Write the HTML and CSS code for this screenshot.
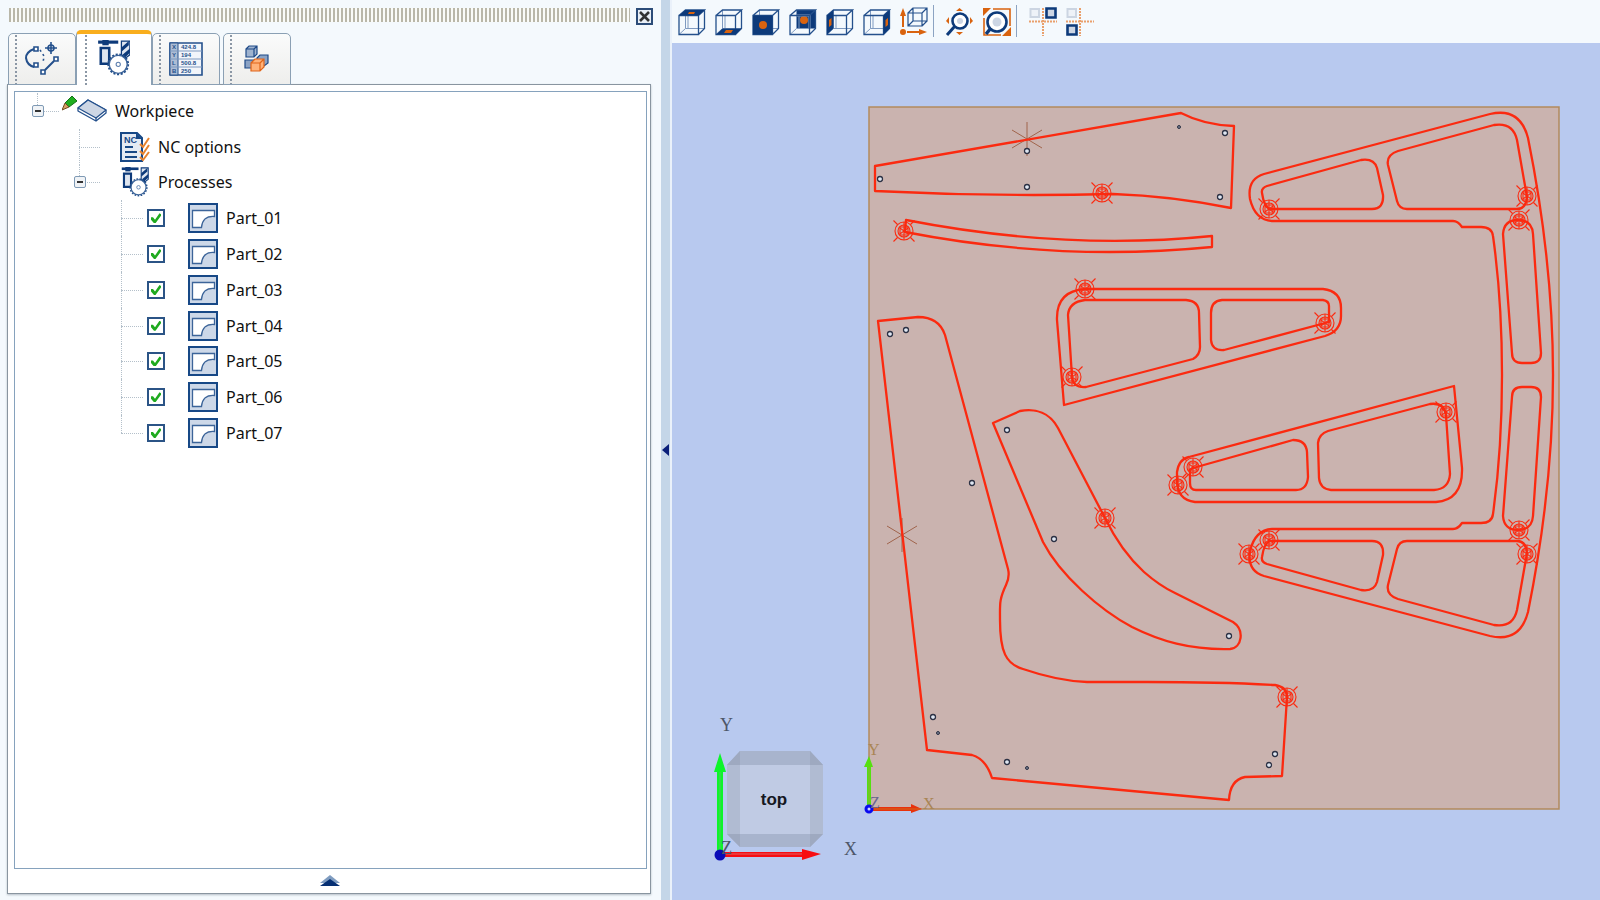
FILE: index.html
```html
<!DOCTYPE html>
<html lang="en">
<head>
    <meta charset="UTF-8">
    <meta name="viewport" content="width=device-width, initial-scale=1.0">
    <title>Workpiece</title>
    <link rel="stylesheet" href="styles.css">
</head>
<body>
    <!-- shared icons -->
    <svg class="defs" aria-hidden="true">
        <symbol id="cube" viewBox="0 0 28 28">
            <path d="M7.5 2V20.5H26.5M10 7.5V20M7.5 20.5L1 26.5" fill="none" stroke="#7f9ac0" stroke-width="1"/>
            <path d="M1 7.5H20.5V26.5H1ZM1 7.5L7.5 2H26.5L20.5 7.5M26.5 2V20.5L20.5 26.5" fill="none" stroke="#24508c" stroke-width="1.3"/>
        </symbol>
        <symbol id="machine" viewBox="0 0 30 34">
            <path d="M0 2H19" stroke="#0d3a7a" stroke-width="3"/>
            <path d="M4 0H10V5H4Z" fill="#0d3a7a"/>
            <path d="M2.5 7.5H10.5V22.5H2.5Z" fill="#dfe6f0" stroke="#0d3a7a" stroke-width="2.4"/>
            <path d="M22 1H30V14L26 17L22 14Z" fill="#dfe6f0" stroke="#0d3a7a" stroke-width="1.2"/>
            <path d="M22 7L29 1V5L22 11ZM23 14L30 8V12L25 17Z" fill="#0d3a7a"/>
            <circle cx="19" cy="23" r="8.5" fill="#fff" stroke="#3c6499" stroke-width="1.3"/>
            <circle cx="19" cy="23" r="9.5" fill="none" stroke="#24508c" stroke-width="1.6" stroke-dasharray="2 1.5"/>
            <circle cx="19" cy="23" r="2" fill="none" stroke="#5d7fae"/>
        </symbol>
        <symbol id="contour" viewBox="0 0 30 30">
            <path d="M1 1H29V29H1Z" fill="#cdd8e8" stroke="#174886" stroke-width="2"/>
            <path d="M4.5 7.5H26.5V13.5Q14.5 12.5 13.5 24.5H4.5Z" fill="#fff" stroke="#3c6499" stroke-width="1.3"/>
        </symbol>
        <symbol id="start" viewBox="-12 -12 24 24">
            <g fill="none" stroke="#fb2a10" stroke-width="1.1">
                <circle r="9"/>
                <circle r="6"/>
                <path d="M-10.5 -10.5L-6.5 -6.5M10.5 -10.5L6.5 -6.5M-10.5 10.5L-6.5 6.5M10.5 10.5L6.5 6.5"/>
                <path d="M0 -9V9M-4 -3V3L4 -3V3ZM-4 -4H4M-4 4H4"/>
            </g>
        </symbol>
        <symbol id="hole" viewBox="-4 -4 8 8">
            <circle r="2.5" fill="#dfe6f2" stroke="#2c3144" stroke-width="1.3"/>
        </symbol>
        <symbol id="pin" viewBox="-4 -4 8 8">
            <circle r="1.5" fill="#777d90" stroke="#2c3144" stroke-width="1"/>
        </symbol>
    </svg>

    <div class="app">
        <aside class="side">
            <div class="side-head">
                <div class="gripper"></div>
                <button class="close" aria-label="Close">
                    <svg viewBox="0 0 13 13"><path d="M2 2L11 11M11 2L2 11" stroke="#333" stroke-width="2.6"/></svg>
                </button>
            </div>

            <div class="tabs">
                <button class="tab" aria-label="Geometry">
                    <svg width="34" height="34" viewBox="0 0 34 34" fill="none" stroke="#24508c" stroke-width="1.6">
                        <path d="M9 7Q1 10 1 16Q2 23 9 25M20 28L29 19" stroke-width="2"/>
                        <path d="M9 5H13V9H9ZM9 21H13V25H9ZM29 15H33V19H29ZM16 28H20V32H16Z" fill="#fff"/>
                        <path d="M26 0V12M20 6H32"/>
                        <circle cx="26" cy="6" r="3"/>
                        <path d="M15 8L19 14L18 21" stroke-dasharray="2 3"/>
                    </svg>
                </button>
                <button class="tab active" aria-label="Processes">
                    <svg width="32" height="36"><use href="#machine"/></svg>
                </button>
                <button class="tab" aria-label="Parameters">
                    <svg width="34" height="34" viewBox="0 0 34 34">
                        <path d="M1 1H33V33H1Z" fill="#f2f5fa" stroke="#24508c" stroke-width="1.6"/>
                        <path d="M1 1H9V33H1Z" fill="#adbdd4" stroke="#24508c"/>
                        <path d="M1 9H33M1 17H33M1 25H33" stroke="#7f9ac0"/>
                        <g class="cell-text">
                            <text x="3" y="7">X</text><text x="12" y="7">424.8</text>
                            <text x="3" y="15">Y</text><text x="12" y="15">194</text>
                            <text x="3" y="23">L</text><text x="12" y="23">500.8</text>
                            <text x="3" y="31">B</text><text x="12" y="31">250</text>
                        </g>
                    </svg>
                </button>
                <button class="tab last" aria-label="Blocks">
                    <svg width="26" height="28" viewBox="0 0 26 28" stroke="#1f4a88" stroke-width="1.2">
                        <path d="M2 4L5 1H13V9L10 12H2ZM2 4H10V12M10 4L13 1" fill="#9fb3cf"/>
                        <path d="M1 15H11V23H1ZM13 13L16 10H24V18L20 21H13Z" fill="#8ba3c5"/>
                        <path d="M7 18L11 14H20V22L16 26H7ZM7 18H16V26M16 18L20 14" fill="#ffb27a" stroke="#e0651a"/>
                    </svg>
                </button>
            </div>

            <div class="panel">
                <div class="tree-box">
                    <ul class="tree">
                        <li class="row root">
                            <button class="toggle" aria-label="Collapse Workpiece"></button>
                            <svg class="pencil" width="15" height="32" viewBox="0 0 15 32">
                                <path d="M3 8L10 1L15 6L7 12Z" fill="#1fae1f" stroke="#14701a"/>
                                <path d="M3 8L7 12L0 15Z" fill="#d9a066" stroke="#6e4a20"/>
                            </svg>
                            <svg width="30" height="24" viewBox="0 0 30 24" stroke="#24508c" stroke-width="1.3" stroke-linejoin="round">
                                <path d="M1 9L11 1L29 11V14L19 22L1 12Z" fill="#fff"/>
                                <path d="M1 9L11 1L29 11L19 19Z" fill="#cdd6e4"/>
                                <path d="M19 19V22"/>
                            </svg>
                            <span class="label">Workpiece</span>
                        </li>
                        <li class="row group">
                            <span class="slot"></span>
                            <svg width="30" height="30" viewBox="0 0 30 30">
                                <path d="M1 1H17L22 6V29H1Z" fill="#e4eaf3" stroke="#174886" stroke-width="2"/>
                                <path d="M16 1V7H22Z" fill="#174886"/>
                                <path d="M5 15H13M5 20H17M5 25H17" stroke="#174886" stroke-width="2"/>
                                <path d="M20 12L23 15L29 6M20 19L23 22L29 13M20 25L23 28L29 20" fill="none" stroke="#e8832e" stroke-width="2"/>
                                <text class="nc-text" x="4" y="11">NC</text>
                            </svg>
                            <span class="label">NC options</span>
                        </li>
                        <li class="row group end">
                            <button class="toggle" aria-label="Collapse Processes"></button>
                            <svg width="30" height="30"><use href="#machine"/></svg>
                            <span class="label">Processes</span>
                        </li>
                        <li class="row part">
                            <input type="checkbox" id="part1" checked>
                            <svg width="30" height="30"><use href="#contour"/></svg>
                            <label class="label" for="part1">Part_01</label>
                        </li>
                        <li class="row part">
                            <input type="checkbox" id="part2" checked>
                            <svg width="30" height="30"><use href="#contour"/></svg>
                            <label class="label" for="part2">Part_02</label>
                        </li>
                        <li class="row part">
                            <input type="checkbox" id="part3" checked>
                            <svg width="30" height="30"><use href="#contour"/></svg>
                            <label class="label" for="part3">Part_03</label>
                        </li>
                        <li class="row part">
                            <input type="checkbox" id="part4" checked>
                            <svg width="30" height="30"><use href="#contour"/></svg>
                            <label class="label" for="part4">Part_04</label>
                        </li>
                        <li class="row part">
                            <input type="checkbox" id="part5" checked>
                            <svg width="30" height="30"><use href="#contour"/></svg>
                            <label class="label" for="part5">Part_05</label>
                        </li>
                        <li class="row part">
                            <input type="checkbox" id="part6" checked>
                            <svg width="30" height="30"><use href="#contour"/></svg>
                            <label class="label" for="part6">Part_06</label>
                        </li>
                        <li class="row part end">
                            <input type="checkbox" id="part7" checked>
                            <svg width="30" height="30"><use href="#contour"/></svg>
                            <label class="label" for="part7">Part_07</label>
                        </li>
                    </ul>
                </div>
                <button class="expand" aria-label="Expand">
                    <svg width="20" height="12" viewBox="0 0 20 12">
                        <path d="M0 8L10 0L20 8Z" fill="#7f9cc0"/>
                        <path d="M0 11L10 4L20 11Z" fill="#062f73"/>
                    </svg>
                </button>
            </div>
        </aside>

        <button class="splitter" aria-label="Hide panel">
            <svg width="7" height="12" viewBox="0 0 7 12"><path d="M7 0V12L0 6Z" fill="#0a1f7a"/></svg>
        </button>

        <main class="view">
            <div class="toolbar">
                <button aria-label="Top view"><svg><use href="#cube"/><path d="M1 7.5L7.5 2H26.5L20.5 7.5Z" fill="#0d3a7a"/><path d="M11 4H17L16 6H10Z" fill="#d9630f"/></svg></button>
                <button aria-label="Bottom view"><svg><use href="#cube"/><path d="M1 26.5L7.5 20.5H26.5L20.5 26.5Z" fill="#0d3a7a"/><path d="M11 22H18L16 25H9Z" fill="#d9630f"/></svg></button>
                <button aria-label="Front view"><svg><use href="#cube"/><path d="M1 7.5H20.5V26.5H1Z" fill="#0d3a7a"/><circle cx="11" cy="17" r="4" fill="#d9630f"/></svg></button>
                <button aria-label="Back view"><svg><path d="M8 2H26.5V20.5H8Z" fill="#0d3a7a"/><circle cx="15" cy="12" r="4" fill="#d9630f"/><path d="M8 7.5H20.5V20" fill="none" stroke="#8ba3c5" stroke-width="2"/><use href="#cube"/></svg></button>
                <button aria-label="Left view"><svg><use href="#cube"/><path d="M1 7.5L7.5 2V20.5L1 26.5Z" fill="#0d3a7a"/><path d="M3 12L5.5 10V17L3 19Z" fill="#d9630f"/></svg></button>
                <button aria-label="Right view"><svg><use href="#cube"/><path d="M20.5 7.5L26.5 2V20.5L20.5 26.5Z" fill="#0d3a7a"/><path d="M22.5 12L25 10V17L22.5 19Z" fill="#d9630f"/></svg></button>
                <button aria-label="Isometric view"><svg fill="none" stroke="#24508c" stroke-width="1.2">
                    <path d="M8 5H22V18H8ZM13 0H27V13H13ZM8 5L13 0M22 5L27 0M22 18L27 13M8 18L13 13"/>
                    <path d="M3 19V7M7 24H20" stroke="#d9630f" stroke-width="2"/>
                    <path d="M0 8L3 0L6 8ZM19 21L27 24L19 27Z" fill="#d9630f" stroke="none"/>
                    <circle cx="3" cy="24" r="3" fill="#d9630f" stroke="none"/></svg></button>
                <span class="sep"></span>
                <button aria-label="Zoom"><svg>
                    <path d="M10 3L13.5 0L17 3ZM10 24L13.5 27L17 24ZM3 9L0 13L3 16ZM24 9L27 13L24 16Z" fill="#d9630f"/>
                    <circle cx="14" cy="13" r="7.5" fill="#fff" stroke="#0d3a7a" stroke-width="2.6"/><circle cx="14" cy="13" r="3" fill="#cdd6e4"/>
                    <path d="M9 18L1 27" stroke="#0d3a7a" stroke-width="3"/></svg></button>
                <button aria-label="Zoom to fit"><svg>
                    <path d="M10 1H27V18M1 10V27H18" fill="none" stroke="#d9630f" stroke-width="1.6"/>
                    <path d="M0 0H8L0 8ZM28 28H19L28 19Z" fill="#d9630f"/>
                    <circle cx="14" cy="14" r="9.5" fill="#fff" stroke="#0d3a7a" stroke-width="2.6"/><circle cx="14" cy="14" r="4.500" fill="#cdd6e4"/>
                    <path d="M8 20L3 26" stroke="#0d3a7a" stroke-width="3.5"/></svg></button>
                <span class="sep"></span>
                <button aria-label="Align right"><svg>
                    <path d="M1.5 1H10V9H1.5Z" fill="#eef2f8" stroke="#ccd5e2" stroke-width="2"/>
                    <path d="M17.5 0.5H26.5V9.5H17.5Z" fill="#cdd6e4" stroke="#0d3a7a" stroke-width="2.6"/>
                    <path d="M0 13.5H28M14 0V28" stroke="#e9a06c" stroke-width="2" stroke-dasharray="2 1"/></svg></button>
                <button aria-label="Align bottom"><svg>
                    <path d="M1.5 1H10V9H1.5Z" fill="#eef2f8" stroke="#ccd5e2" stroke-width="2"/>
                    <path d="M1.5 17.5H10.5V26.5H1.5Z" fill="#cdd6e4" stroke="#0d3a7a" stroke-width="2.6"/>
                    <path d="M0 13.5H28M14 0V28" stroke="#e9a06c" stroke-width="2" stroke-dasharray="2 1"/></svg></button>
            </div>

            <svg class="scene" viewBox="672 43 928 857" preserveAspectRatio="xMinYMin meet">
                <path class="sheet" d="M869 107H1559V809H869Z"/>

                <g class="cross">
                    <path d="M1027 122V156M1012 130L1042 148M1042 130L1012 148"/>
                    <path d="M902 518V552M887 526L917 544M917 526L887 544"/>
                </g>

                <g class="cut">
                    <path d="M875 166L1181 113Q1204 125 1234 126L1231 208Q1172 196 1113 194Q994 197 875 191Z"/>
                    <path d="M906 220Q1065 251 1212 236V247Q1059 262 905 232Z"/>

                    <path d="M1085 289H1323Q1341 291 1341 308V316Q1341 331 1325 336L1064 405L1057 320Q1056 291 1085 289Z"/>
                    <path d="M1085 300H1186Q1199 301 1199 313L1200 347Q1200 355 1193 359L1086 387Q1073 388 1072 377L1068 315Q1069 302 1085 300Z"/>
                    <path d="M1222 300H1323Q1329 301 1329 306V322L1224 350Q1212 351 1211 340V313Q1211 301 1222 300Z"/>

                    <path d="M878 321L918 317Q939 317 945 335L1008 569Q1010 577 1006 585C999 600 1000 604 1000 620C1000 652 1006 664 1023 669Q1058 681 1087 682L1147 682Q1220 682 1275 685Q1287 687 1287 697L1282 776L1245 777Q1230 780 1229 800L992 778Q986 759 972 755L927 750Z"/>

                    <path d="M993 423L1020 411C1036 408 1050 413 1058 428L1105 518Q1121 551 1144 572Q1160 586 1175 593L1233 622C1245 630 1242 648 1230 649C1190 650 1160 641 1132 627C1100 610 1060 575 1043 542Z"/>

                    <path d="M1189 457L1454 386L1462 468Q1463 500 1436 502H1195Q1177 500 1177 480V472Q1179 459 1189 457Z"/>
                    <path d="M1193 468L1293 440Q1306 440 1307 452L1308 477Q1307 490 1296 490H1196Q1190 490 1190 483V470Z"/>
                    <path d="M1328 431L1430 404Q1444 402 1446 415L1450 474Q1449 489 1434 490H1331Q1320 489 1319 478L1318 443Q1319 434 1328 431Z"/>

                    <path d="M1502 375Q1502 300 1493 236Q1492 227 1481 227H1462Q1458 221 1453 221H1272Q1255 220 1250 199Q1247 179 1264 174L1490 114Q1520 107 1528 138Q1553 262 1553 375Q1553 488 1528 612Q1520 643 1490 636L1264 576Q1247 571 1250 551Q1255 530 1272 529H1453Q1458 529 1462 523H1481Q1492 523 1493 514Q1502 450 1502 375Z"/>
                    <g id="windows">
                        <path d="M1262 193Q1261 188 1267 186L1361 160Q1374 158 1377 168L1383 195Q1384 209 1372 209H1270Q1264 207 1262 193Z"/>
                        <path d="M1398 151L1494 125Q1513 122 1517 140L1527 197Q1526 209 1517 209H1407Q1399 209 1397 201L1388 165Q1386 155 1398 151Z"/>
                        <path d="M1503 234Q1504 220 1518 220Q1532 220 1533 234L1541 353Q1541 363 1531 363H1522Q1512 363 1512 353Z"/>
                    </g>
                    <use href="#windows" transform="matrix(1 0 0 -1 0 750)"/>
                </g>

                <g id="holes"></g>
                <g id="starts"></g>

                <!-- origin of the sheet -->
                <path d="M867 808V767H864L869 756L873 767H871V808Z" fill="#55e010"/>
                <path d="M869 767V808" stroke="#8fae30"/>
                <path d="M869 807H911V804L922 809L911 813V811H869Z" fill="#e8320c"/>
                <path d="M869 809H920" stroke="#d06a1c"/>
                <circle cx="869" cy="809" r="3" fill="#c9d4ff" stroke="#0a0af0" stroke-width="3"/>
                <g class="axis small">
                    <text x="868" y="755">Y</text>
                    <text x="923" y="809">X</text>
                    <text class="z" x="870" y="808">Z</text>
                </g>

                <!-- view cube -->
                <path d="M740 751H810L823 765V834L810 847H740L727 834V765Z" fill="#a8b4cd"/>
                <path d="M727 765H740V834H727ZM810 765H823V834H810Z" fill="#b0bbd2"/>
                <path d="M740 751V765H727ZM810 751L823 765H810ZM727 834H740V847ZM823 834H810V847Z" fill="#9ea9c0"/>
                <path d="M740 765H810V834H740Z" fill="#c0cbe4"/>
                <text class="face" x="774" y="805">top</text>
                <path d="M717 852V772H714L720 753L726 772H723V852Z" fill="#0cf52a"/>
                <path d="M720 772V850" stroke="#50c860"/>
                <path d="M720 852H802V849L821 854L802 860V857H720Z" fill="#f70d12"/>
                <path d="M724 854H802" stroke="#e06060"/>
                <circle cx="720" cy="855" r="5.5" fill="#0a0ab8"/>
                <g class="axis">
                    <text x="720" y="731">Y</text>
                    <text x="844" y="855">X</text>
                    <text x="721" y="854">Z</text>
                </g>
            </svg>
        </main>
    </div>

    <script>
        const starts = [
            [1102, 193], [904, 231], [1085, 289], [1072, 377], [1325, 323],
            [1178, 485], [1193, 467], [1446, 412], [1105, 518], [1287, 697],
            [1269, 209], [1527, 196], [1519, 220],
            [1249, 554], [1269, 540], [1527, 554], [1519, 530]
        ];
        const holes = [
            [880, 179], [1027, 151], [1027, 187], [1225, 133], [1220, 197],
            [890, 334], [906, 330], [1007, 430], [972, 483], [1054, 539],
            [1229, 636], [933, 717], [1007, 762], [1275, 754], [1269, 765]
        ];
        const pins = [[1179, 127], [938, 733], [1027, 768]];

        function place(symbol, size, points) {
            return points.map(([x, y]) =>
                `<use href="#${symbol}" x="${x - size / 2}" y="${y - size / 2}" width="${size}" height="${size}"/>`
            ).join('');
        }

        document.getElementById('starts').innerHTML = place('start', 24, starts);
        document.getElementById('holes').innerHTML = place('hole', 8, holes) + place('pin', 8, pins);
    </script>
</body>
</html>
```

FILE: styles.css
```css
* {
    margin: 0;
    padding: 0;
    box-sizing: border-box;
}
body {
    font-family: "Noto Sans", sans-serif;
    font-size: 16px;
    color: #111;
    background-color: #f4f9fd;
}
button {
    background: none;
    border: none;
    cursor: pointer;
}
.defs {
    position: absolute;
    width: 0;
    height: 0;
}
.app {
    display: flex;
    height: 100vh;
    overflow: hidden;
}

/* left side */
.side {
    flex: 0 0 41.3%;
    display: flex;
    flex-direction: column;
}
.side-head {
    display: flex;
    gap: 6px;
    height: 30px;
    padding: 8px 8px 0 9px;
}
.gripper {
    flex: 1;
    height: 14px;
    background: repeating-linear-gradient(90deg, #b9b7a9 0 2px, #fafbf8 2px 4px);
}
.close {
    width: 17px;
    height: 17px;
    border: 2px solid #2c4c78;
    background-color: #e9eff6;
}
.close svg {
    display: block;
    width: 13px;
    height: 13px;
}
.tabs {
    display: flex;
    align-items: flex-end;
    height: 55px;
    margin: 0 8px -1px;
    position: relative;
}
.tab {
    display: flex;
    align-items: center;
    justify-content: center;
    width: 68px;
    height: 52px;
    border: 1px solid #8ba0b4;
    border-radius: 5px 5px 0 0;
    background: radial-gradient(circle at 7px 1px, #8b97a5 1px, transparent 1px) 0 5px / 14px 4px repeat-y, linear-gradient(#fafbfb, #eeeeec);
}
.tab.active {
    width: 76px;
    height: 55px;
    padding-bottom: 4px;
    border-top: 4px solid #f9ae1d;
    border-bottom: none;
    background: radial-gradient(circle at 9px 1px, #8b97a5 1px, transparent 1px) 0 5px / 14px 4px repeat-y, #fff;
}
.tab.last {
    margin-left: 3px;
}
.cell-text {
    font: bold 6px "Liberation Sans", sans-serif;
    fill: #24508c;
}
.nc-text {
    font: bold 9px "Liberation Sans", sans-serif;
    fill: #174886;
}
.panel {
    flex: 1;
    display: flex;
    flex-direction: column;
    margin: 0 10px 6px 7px;
    padding: 6px 3px 0 6px;
    border: 1px solid #8995a0;
    background-color: #fff;
    box-shadow: 0 1px 2px #b5bec6;
}
.tree-box {
    flex: 1;
    border: 1px solid #86a2bd;
}
.tree {
    display: grid;
    grid-template-rows: repeat(10, 1fr);
    height: 358px;
    margin-top: 1px;
    list-style: none;
}
.row {
    position: relative;
    display: flex;
    align-items: center;
}
.label {
    margin-left: 8px;
    line-height: 20px;
}
.row::before,
.row::after {
    content: "";
    position: absolute;
    border: 0 dotted #b4c0ca;
}
.row::before {
    top: 0;
    height: 100%;
    border-left-width: 1px;
}
.row::after {
    top: 50%;
    border-top-width: 1px;
}
.row.end::before {
    height: 50%;
}
.root {
    padding-left: 17px;
}
.root::before {
    left: 22px;
    height: 50%;
}
.root::after {
    left: 28px;
    width: 16px;
}
.pencil {
    margin-left: 18px;
}
.group {
    padding-left: 59px;
}
.group::before {
    left: 64px;
}
.group::after {
    left: 64px;
    width: 21px;
}
.group svg {
    margin-left: 34px;
}
.slot {
    width: 12px;
}
.part {
    padding-left: 132px;
}
.part::before,
.part::after {
    left: 106px;
}
.part::after {
    width: 22px;
}
.part svg {
    margin-left: 23px;
}
.toggle {
    position: relative;
    z-index: 1;
    width: 12px;
    height: 12px;
    border: 1px solid #7f9ab5;
    border-radius: 2px;
    background: linear-gradient(#333, #333) center / 6px 2px no-repeat, #f0f3f6;
}
input[type="checkbox"] {
    appearance: none;
    width: 18px;
    height: 18px;
    border: 2px solid #2b5486;
    background-color: #fff;
}
input[type="checkbox"]:checked::after {
    content: "";
    display: block;
    width: 10px;
    height: 10px;
    margin: 2px;
    background-color: #1faa1f;
    clip-path: polygon(0 40%, 20% 40%, 40% 65%, 85% 0, 100% 10%, 100% 25%, 45% 100%, 30% 100%, 0 65%);
}
.expand {
    display: flex;
    align-items: center;
    justify-content: center;
    height: 24px;
}

.splitter {
    display: flex;
    align-items: center;
    justify-content: center;
    flex: 0 0 11px;
    border-right: 2px solid #eaf1fa;
    background-color: #c4d6e8;
}

/* 3D view */
.view {
    flex: 1;
    min-width: 0;
    display: flex;
    flex-direction: column;
    background-color: #b8c9ef;
}
.toolbar {
    display: flex;
    align-items: center;
    gap: 9px;
    height: 43px;
    padding: 1px 6px 0;
    background-color: #f4f9fd;
}
.toolbar button,
.toolbar svg {
    display: block;
    width: 28px;
    height: 28px;
}
.toolbar svg {
    overflow: visible;
}
.sep {
    width: 1px;
    height: 32px;
    margin: 0 3px 2px -4px;
    background-color: #8ca3c2;
}
.scene {
    flex: 1;
    display: block;
    width: 100%;
    min-height: 0;
}
.sheet {
    fill: #cab3af;
    stroke: #b28a5e;
    stroke-width: 1.5;
}
.cut {
    fill: none;
    stroke: #fb2a10;
    stroke-width: 2.3;
    stroke-linejoin: round;
}
.cross {
    stroke: #a0644c;
    stroke-width: 1;
}
.axis {
    font: 18px "Liberation Serif", serif;
    fill: #4d5668;
}
.axis.small {
    font-size: 16px;
    fill: #a98555;
}
.axis .z {
    fill: #6a6690;
}
.face {
    font: bold 17px "Liberation Sans", sans-serif;
    text-anchor: middle;
    fill: #15181f;
}
```
